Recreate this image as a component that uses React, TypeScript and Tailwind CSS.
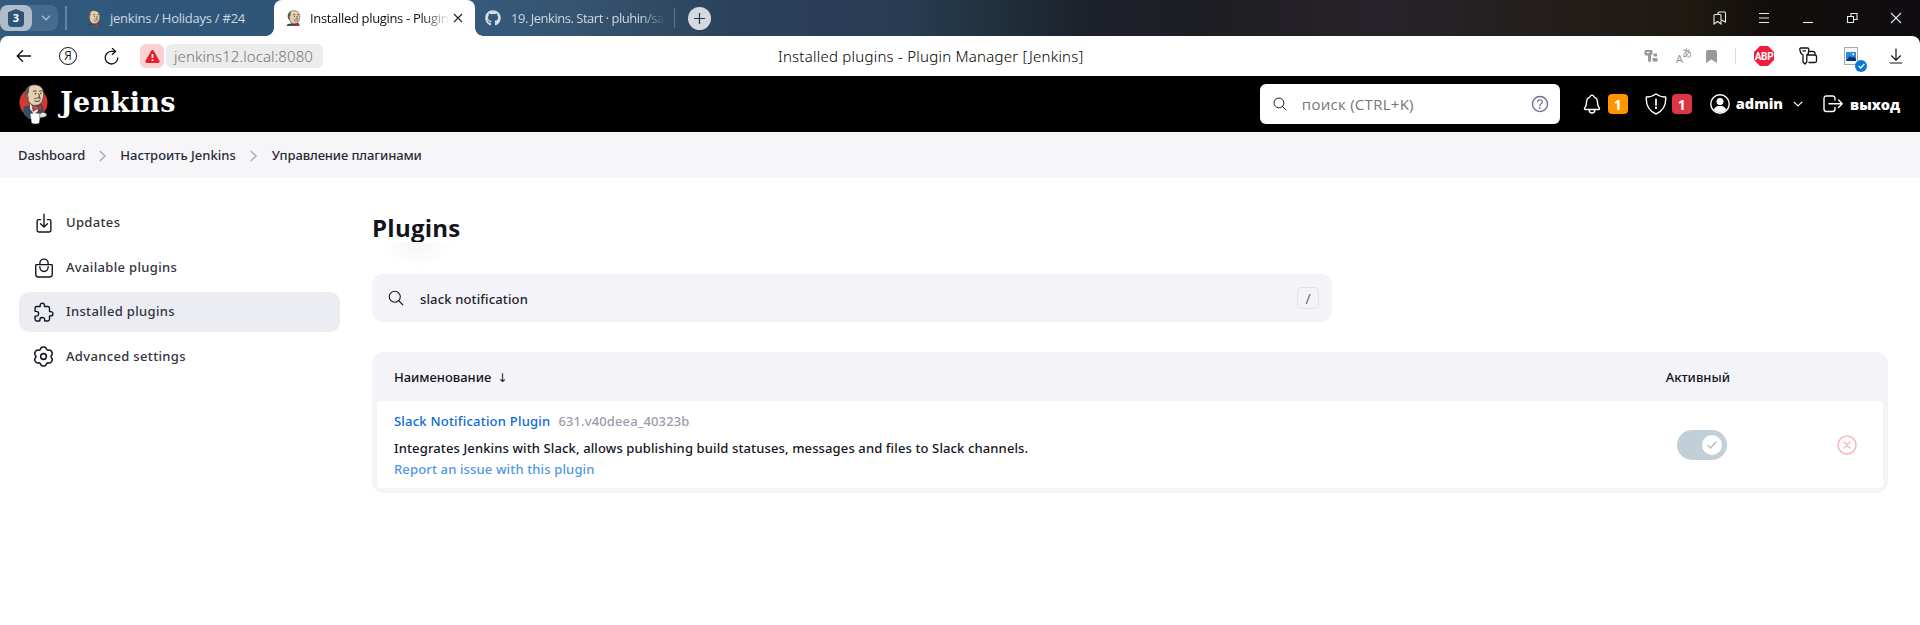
import React from "react";
import {
  IoSearchOutline,
  IoNotificationsOutline,
  IoExtensionPuzzleOutline,
  IoBagHandleOutline,
  IoDownloadOutline,
  IoHelpCircleOutline,
  IoCloseCircleOutline,
} from "react-icons/io5";
import { FaGithub } from "react-icons/fa";

function Butler({ className, disc, mug }: { className: string; disc?: boolean; mug?: boolean }) {
  return (
    <svg className={className} viewBox={mug ? "0 0 30 40" : "2 0 24 25"} aria-hidden="true">
      {disc && <ellipse cx="14.500" cy="18.500" rx="14" ry="14.500" fill="#d33833" />}
      <path d="M6 22 Q3 24 5.500 31 L10 35 H21 L24 31 Q26 24 22 20 Z" fill="#335061" />
      <path d="M8.500 15 Q5 11 7 6.500 Q9 1 15 0.800 Q21 0.600 23.500 5 Q25.500 9 24.500 13 Q24 19 19.500 21 Q14 23 10.500 19 Z" fill="#e6cfae" stroke="#2f2a26" strokeWidth="0.7" />
      <path d="M8 15 Q4.500 11 6.500 6 Q8 2.500 11 1.800 Q9.500 5 10 8.500 L8.800 10 Q10 13 9.500 16 Z" fill="#5b5954" />
      <path d="M8.500 10.500 Q6.500 11 8 14.500" fill="#e6cfae" stroke="#2f2a26" strokeWidth="0.5" />
      <path d="M14 7.500 Q15.500 6.300 17.500 7.300 M20.200 7.200 Q22 6.300 23.200 7.500 M19.500 9.500 L21 13 L18.800 13.400 M15.500 17 Q18.500 18.200 21.300 16.500" fill="none" stroke="#2f2a26" strokeWidth="0.9" />
      <circle cx="16.500" cy="9.700" r="0.8" fill="#2f2a26" />
      <circle cx="21.800" cy="9.500" r="0.7" fill="#2f2a26" />
      <path d="M15 14.800 Q18.500 13.300 22.300 14.700" fill="none" stroke="#6b6a65" strokeWidth="1" />
      <path d="M11 19.500 Q13 23.500 18 23 L19 27 L15 30 L11 25 Z" fill={mug ? "#f0f0ee" : "#335061"} />
      <path d="M13 22.500 L18 24 L22 20.800 L22.700 26 L18.500 24.800 L14 27.500 Z" fill="#d33833" stroke="#81211f" strokeWidth="0.4" />
      {mug && (
        <>
          <path d="M11.500 30 Q16 28.500 21 30 L20 39 Q16.500 40.500 12.800 39 Z" fill="#fff" stroke="#cfd3d6" strokeWidth="0.4" />
          <path d="M20.500 31 Q21.500 28 24.500 28.500 Q28.500 29 27.500 31.500 Q26 33.500 21 33.500 Z" fill="#e8e8e8" stroke="#4b4b4b" strokeWidth="0.5" />
        </>
      )}
    </svg>
  );
}

function Chevron({ className }: { className: string }) {
  return (
    <svg className={className} viewBox="0 0 14 16" fill="none" stroke="currentColor" strokeWidth="1.900" strokeLinecap="round" strokeLinejoin="round">
      <path d="M4 2 L10.500 8 L4 14" />
    </svg>
  );
}

function TabBar() {
  return (
    <div className="flex h-9 w-full items-center bg-[linear-gradient(90deg,#315a7e_0%,#2f5577_14%,#35597b_25%,#36546f_30%,#2b4059_39%,#283d54_47%,#20303c_52%,#1c2029_57%,#1e1e23_64%,#28232a_72%,#231e1b_81%,#1f1912_88%,#120e0c_92%,#0e0c10_100%)] text-[#cbd8e3]">
      <div className="flex h-[26px] w-[58px] items-center rounded-r-lg rounded-l-md bg-[#466b8c]">
        <div className="flex h-[26px] w-8 items-center justify-center rounded-lg bg-[#afbdca]">
          <div className="flex h-[18px] w-4 items-center justify-center rounded-[4px] bg-[#2d5476] font-['Open_Sans',sans-serif] text-[11px] font-bold text-white [clip-path:polygon(50%_0,100%_18%,100%_100%,0_100%,0_18%)]">3</div>
        </div>
        <svg className="ml-[9px] h-[6px] w-[10px]" viewBox="0 0 10 6" fill="none" stroke="#a9bccd" strokeWidth="1.3"><path d="M1 .7 5 4.800 9 .7" /></svg>
      </div>
      <div className="ml-[7px] h-6 w-[2px] bg-[#6683a0]" />
      <div className="flex w-[207px] items-center pl-[18px]">
        <Butler className="h-4 w-4" />
        <span className="mt-px ml-[9px] font-['Open_Sans',sans-serif] text-[13px] tracking-[-0.25px] whitespace-nowrap">jenkins / Holidays / #24</span>
      </div>
      <div className="relative flex h-9 w-[201px] items-center rounded-t-lg bg-white pl-[11px] text-[#111]">
        <div className="absolute bottom-0 -left-2 h-2 w-2 bg-[radial-gradient(circle_at_0_0,transparent_7.500px,#fff_8px)]" />
        <div className="absolute -right-2 bottom-0 h-2 w-2 bg-[radial-gradient(circle_at_100%_0,transparent_7.500px,#fff_8px)]" />
        <Butler className="h-4 w-4" />
        <span className="mt-px ml-[9px] w-[143px] font-['Open_Sans',sans-serif] text-[13px] tracking-[-0.33px] whitespace-nowrap [mask-image:linear-gradient(90deg,#000_78%,transparent_98%)]">Installed plugins - Plugin</span>
        <svg className="h-[10px] w-[10px]" viewBox="0 0 10 10" stroke="#222" strokeWidth="1.1"><path d="M1 1 9 9M9 1 1 9" /></svg>
      </div>
      <div className="flex w-[199px] items-center pl-[10px]">
        <FaGithub className="h-4 w-4 text-[#d5dde5]" />
        <span className="mt-px ml-[10px] w-[157px] font-['Open_Sans',sans-serif] text-[13px] tracking-[-0.48px] whitespace-nowrap [mask-image:linear-gradient(90deg,#000_82%,transparent_99%)]">19. Jenkins. Start · pluhin/sa</span>
      </div>
      <div className="h-5 w-px bg-[#5a7490]" />
      <div className="ml-[13px] flex h-[23px] w-[23px] items-center justify-center rounded-full bg-[#d3d9df]">
        <svg className="h-[11px] w-[11px]" viewBox="0 0 11 11" stroke="#26384b" strokeWidth="1.2"><path d="M5.500 0V11M0 5.500H11" /></svg>
      </div>
      <div className="mr-[17px] ml-auto flex items-center gap-[30px] text-[#e9e9e9]">
        <svg className="h-[14px] w-[14px]" viewBox="0 0 14 14" fill="none" stroke="currentColor" strokeWidth="1.1"><path d="M1 4.500Q1 3.500 2 3.500H7Q8 3.500 8 4.500V13L4.500 10.500 1 13Z" /><path d="M5 3V2Q5 1 6 1H11.500Q12.500 1 12.500 2V11L8.500 9" /></svg>
        <svg className="h-[14px] w-[14px]" viewBox="0 0 14 14" stroke="currentColor" strokeWidth="1.1"><path d="M2 2.500H12M2 7H12M2 11.500H12" /></svg>
        <svg className="h-[14px] w-[14px]" viewBox="0 0 14 14" stroke="currentColor" strokeWidth="1.1"><path d="M2 11.500H12" /></svg>
        <svg className="h-[14px] w-[14px]" viewBox="0 0 14 14" fill="none" stroke="currentColor" strokeWidth="1.1"><path d="M2.500 5.500H8.500V11.500H2.500ZM6 5.500V2.500H12V8.500H8.500" /></svg>
        <svg className="h-[14px] w-[14px]" viewBox="0 0 14 14" stroke="currentColor" strokeWidth="1.1"><path d="M2 2 12 12M12 2 2 12" /></svg>
      </div>
    </div>
  );
}

function Toolbar() {
  return (
    <div className="h-10 bg-[linear-gradient(90deg,#2f5577_50%,#0e0c10_50%)]">
      <div className="flex h-10 items-center rounded-t-lg bg-white pl-4 font-['Open_Sans',sans-serif]">
        <svg className="h-[14px] w-4" viewBox="0 0 16 14" fill="none" stroke="#111" strokeWidth="1.3"><path d="M15 7H1.500M7 1.200 1.200 7 7 12.800" /></svg>
        <div className="ml-[27px] flex h-[18px] w-[18px] items-center justify-center rounded-full border-[1.3px] border-[#111] text-[12px] leading-none text-[#111]">Я</div>
        <svg className="ml-[27px] h-[17px] w-[15px]" viewBox="0 0 15 17" fill="none" stroke="#111" strokeWidth="1.3"><path d="M13.800 9.500A6.300 6.300 0 1 1 8 3.400H11.500M8 0 11.500 3.400 8 6.800" /></svg>
        <div className="ml-[21px] flex h-6 w-6 items-center justify-center rounded-[6px] bg-[#fbd0d3]">
          <svg className="h-[13px] w-[15px]" viewBox="0 0 15 13"><path d="M6.200.8Q7.500-.6 8.800.8L14.600 11Q15 13 13 13H2Q0 13 .4 11Z" fill="#e3212d" /><path d="M7.500 4V8M7.500 9.500V11" stroke="#fff" strokeWidth="1.7" /></svg>
        </div>
        <div className="ml-[2px] flex h-6 w-[157px] items-center rounded-[6px] bg-[#ececec] pl-2 text-[15px] whitespace-nowrap text-[#747474]">
          <span className="font-['Noto_Sans',sans-serif] font-light tracking-[0.08px]">jenkins12.local:8080</span>
        </div>
        <span className="ml-[455px] font-['Noto_Sans',sans-serif] text-[15px] font-light tracking-[0.24px] whitespace-nowrap text-black">Installed plugins - Plugin Manager [Jenkins]</span>
        <div className="mr-[17px] ml-auto flex items-center">
          <svg className="h-[14px] w-[14px]" viewBox="0 0 14 14" fill="#999"><path d="M1.500 1H7.500Q8.500 1 8.500 2V5L7 6.500V12L5.500 13.500 4 12V6.500H1.500L.5 5.500V2ZM9.500 4.500H13V7.500H9.500ZM8.500 9H13.500V12.500H8.500Z" /><path d="M2.500 3.500H5.500" stroke="#fff" /></svg>
          <div className="ml-[18px] flex w-4 items-start leading-none text-[#8c8c8c]">
            <span className="mt-[5px] text-[11px]">A</span>
            <span className="-ml-px font-['Noto_Sans_CJK_JP',sans-serif] text-[10px]">あ</span>
          </div>
          <svg className="ml-[14px] h-[13px] w-[11px]" viewBox="0 0 11 13" fill="#999"><path d="M2 0H9Q11 0 11 2V13L5.500 9.500 0 13V2Q0 0 2 0Z" /></svg>
          <div className="ml-[18px] h-4 w-px bg-[#dcdcdc]" />
          <div className="ml-[18px] flex h-[20px] w-[20px] items-center justify-center bg-[#ed1d3d] font-['Roboto',sans-serif] text-[10px] font-bold tracking-[-0.3px] text-white [clip-path:polygon(30%_0,70%_0,100%_30%,100%_70%,70%_100%,30%_100%,0_70%,0_30%)]">ABP</div>
          <svg className="ml-[25px] h-[18px] w-[19px]" viewBox="0 0 19 18" fill="none" stroke="#111" strokeWidth="1.3" strokeLinejoin="round"><path d="M2 1H8.500Q10 1 9.800 2.800L9.300 6.500 7.800 8V15L6 17 4 15V8L2 6.500.8 2.800Q.6 1 2 1ZM3.500 3.800H7M9.800 4.500H14Q16 4.500 16 6.500V8M7.800 8H16Q17.500 8 17.500 9.500V14Q17.500 15.500 16 15.500H9.500" /></svg>
          <div className="relative ml-[26px] h-[18px] w-[14px] border border-[#a9a9a9] bg-[#f7f7f7]">
            <svg className="mt-[4px] ml-px h-[9px] w-[10px]" viewBox="0 0 10 9"><path d="M0 0H10V9H0Z" fill="#2c8ae0" /><path d="M0 9 4 4 6 6 7.500 4.500 10 7V9Z" fill="#10315c" /><circle cx="7.300" cy="2.300" r="1" fill="#fff" /></svg>
            <div className="absolute -right-[10px] -bottom-[8px] flex h-3 w-3 items-center justify-center rounded-full bg-[#0a78d6]">
              <svg className="h-[6px] w-[7px]" viewBox="0 0 7 6" fill="none" stroke="#fff" strokeWidth="1.3"><path d="M.7 3 2.800 5 6.300.8" /></svg>
            </div>
          </div>
          <svg className="ml-[31px] h-[16px] w-[14px]" viewBox="0 0 14 16" fill="none" stroke="#111" strokeWidth="1.2"><path d="M7 .5V12M2.300 7.500 7 12.200 11.700 7.500M.8 15H13.200" /></svg>
        </div>
      </div>
    </div>
  );
}

function Header() {
  return (
    <header className="flex h-14 items-center bg-black font-['Open_Sans',sans-serif] text-white">
      <Butler className="ml-[19px] h-10 w-[30px]" disc mug />
      <span className="ml-[11px] -mt-[3px] font-['DejaVu_Serif',serif] text-[27px] leading-none font-bold tracking-[0.35px]">Jenkins</span>
      <div className="mr-[23px] ml-auto flex h-10 w-[300px] items-center rounded-[6px] bg-white">
        <IoSearchOutline className="ml-[12px] h-[16px] w-[16px] text-[#23232e]" />
        <span className="ml-[14px] text-[15px] tracking-[0.28px] text-[#757575]">поиск (CTRL+K)</span>
        <IoHelpCircleOutline className="mr-[9px] ml-auto h-[22px] w-[22px] text-[#6f6f94]" />
      </div>
      <div className="mr-5 flex items-center whitespace-nowrap">
        <IoNotificationsOutline className="-ml-[2px] h-[22px] w-[22px]" />
        <span className="ml-[5px] flex h-5 w-5 items-center justify-center rounded-[4px] bg-[#fe9501] text-[14px] font-bold">1</span>
        <svg className="ml-[17px] h-[22px] w-[22px]" viewBox="0 0 22 22" fill="none" stroke="currentColor" strokeWidth="1.4" strokeLinecap="round" strokeLinejoin="round"><path d="M11 1Q15 4 20.700 4 21.500 16.500 11 21 .5 16.500 1.300 4 7 4 11 1Z" /><path d="M11 6.300V12" strokeWidth="1.700" /><circle cx="11" cy="14.800" r=".5" fill="currentColor" /></svg>
        <span className="ml-[5px] flex h-5 w-5 items-center justify-center rounded-[4px] bg-[#dc3545] text-[14px] font-bold">1</span>
        <svg className="ml-[18px] h-5 w-5" viewBox="0 0 20 20"><circle cx="10" cy="10" r="9.200" fill="none" stroke="#fff" strokeWidth="1.4" /><circle cx="10" cy="7.600" r="3.500" fill="#fff" /><path d="M3.600 15.800Q5.500 11.800 10 11.800T16.400 15.800Q13.500 18.600 10 18.600T3.600 15.800Z" fill="#fff" /></svg>
        <span className="ml-[6px] text-[14.500px] font-extrabold">admin</span>
        <svg className="ml-[10px] h-[6px] w-[10px]" viewBox="0 0 10 6" fill="none" stroke="#fff" strokeWidth="1.200"><path d="M.8.8 5 5 9.200.8" /></svg>
        <svg className="ml-5 h-[18px] w-5" viewBox="0 0 20 18" fill="none" stroke="#fff" strokeWidth="1.400" strokeLinecap="round" strokeLinejoin="round"><path d="M12 5V3.500Q12 1 9.500 1H3.500Q1 1 1 3.500V14Q1 16.500 3.500 16.500H9.500Q12 16.500 12 14V12.500M6 8.800H19M15.500 5 19.200 8.800 15.500 12.500" /></svg>
        <span className="mt-px ml-[7px] text-[14.500px] font-extrabold tracking-[-0.05px]">выход</span>
      </div>
    </header>
  );
}

function Breadcrumbs() {
  return (
    <nav className="flex h-[46px] items-center bg-[#f6f6f9] pt-px pl-[18px] font-['Noto_Sans',sans-serif] text-[13px] font-medium whitespace-nowrap text-[#2a2a36]">
      <span className="tracking-[-0.1px]">Dashboard</span>
      <Chevron className="mx-[10px] h-3 w-[15px] text-[#a8a8bd]" />
      <span className="tracking-[0px]">Настроить Jenkins</span>
      <Chevron className="mr-[11px] ml-[10px] h-3 w-[15px] text-[#a8a8bd]" />
      <span className="tracking-[-0.12px]">Управление плагинами</span>
    </nav>
  );
}

const gearPath =
  Array.from({ length: 120 }, (_, i) => {
    const a = (i / 120) * Math.PI * 2;
    const r = 9.1 + 1.0 * Math.cos(6 * a) - 0.25 * Math.cos(12 * a);
    return `${i ? "L" : "M"}${(12 + r * Math.sin(a)).toFixed(2)} ${(12 - r * Math.cos(a)).toFixed(2)}`;
  }).join("") + "Z";

function GearIcon({ className }: { className?: string }) {
  return (
    <svg className={className} viewBox="0 0 24 24" fill="none" stroke="currentColor" strokeWidth="1.600" strokeLinejoin="round">
      <path d={gearPath} />
      <circle cx="12" cy="12" r="3" />
    </svg>
  );
}

function Sidebar() {
  const base = "flex h-10 items-center rounded-[10px] pl-[12px]";
  const items = [
    { label: "Updates", icon: <IoDownloadOutline className="h-[22px] w-[22px]" /> },
    { label: "Available plugins", icon: <IoBagHandleOutline className="h-[22px] w-[22px]" /> },
    { label: "Installed plugins", icon: <IoExtensionPuzzleOutline className="h-[22px] w-[22px]" />, active: true },
    { label: "Advanced settings", icon: <GearIcon className="h-[23px] w-[23px]" /> },
  ];
  return (
    <aside className="ml-[19px] flex w-[321px] flex-col gap-[4.500px] pt-[25px] text-[#14141f]">
      {items.map((item) => (
        <a key={item.label} className={item.active ? `${base} bg-[#ecedf3]` : base}>
          <span className="ml-px flex w-[23px] justify-center">{item.icon}</span>
          <span className="ml-[11px] font-['Noto_Sans',sans-serif] text-[13px] font-medium tracking-[0.34px] text-[#333340]">{item.label}</span>
        </a>
      ))}
    </aside>
  );
}

function PluginTable() {
  return (
    <section className="mt-[30px] flex h-[141px] w-[1516px] flex-col rounded-[12px] bg-[#f3f3f8] px-[5px] pb-[5px] font-['Noto_Sans',sans-serif] text-[13px] font-medium">
      <div className="flex h-[49px] items-center pt-[2px] pl-[17px] text-[#14141f]">
        <span className="tracking-[-0.02px]">Наименование</span>
        <span className="ml-[6px] font-['DejaVu_Sans',sans-serif] text-[12px] font-normal">↓</span>
        <span className="mr-[153px] ml-auto tracking-[0px]">Активный</span>
      </div>
      <div className="flex flex-1 items-center rounded-[4px] bg-white pl-[17px]">
        <div className="flex flex-col whitespace-nowrap">
          <div className="flex items-center gap-[8px] leading-[20px]">
            <a className="tracking-[0.22px] text-[#0a6bd6]">Slack Notification Plugin</a>
            <span className="tracking-[0.12px] text-[#9b9bb0]">631.v40deea_40323b</span>
          </div>
          <p className="mt-[6px] leading-[22px] tracking-[0.125px] text-[#14141f]">Integrates Jenkins with Slack, allows publishing build statuses, messages and files to Slack channels.</p>
          <a className="leading-[20px] tracking-[0.145px] text-[#4f97e3]">Report an issue with this plugin</a>
        </div>
        <div className="ml-auto flex h-[30px] w-[50px] items-center justify-end rounded-full bg-[#c1cfd8] pr-[5px]">
          <div className="flex h-5 w-5 items-center justify-center rounded-full bg-white">
            <svg className="h-2 w-[10px]" viewBox="0 0 10 8" fill="none" stroke="#b3c4cf" strokeWidth="1.500" strokeLinecap="round"><path d="M1 4.500 3.500 7 9 1" /></svg>
          </div>
        </div>
        <IoCloseCircleOutline className="mr-[24px] ml-[108px] h-6 w-6 text-[#fbb5bd]" />
      </div>
    </section>
  );
}

function Main() {
  return (
    <main className="ml-8 flex flex-col">
      <h1 className="mt-[33px] h-[31px] text-[24px] leading-[34px] font-bold tracking-[0.25px] text-[#14141f]">Plugins</h1>
      <div className="ml-3 h-[26px] w-[70px] bg-[radial-gradient(ellipse_at_50%_0,#f5f5f6_0%,#fff_70%)]" />
      <div className="mt-[6px] flex h-12 w-[960px] items-center rounded-[10px] bg-[#f3f3f8] pr-[13px] pl-[15px]">
        <IoSearchOutline className="-mt-px h-[18px] w-[18px] text-[#14141f]" />
        <span className="mt-[3px] ml-[15px] font-['Noto_Sans',sans-serif] text-[13px] font-medium tracking-[0.14px] text-[#22222d]">slack notification</span>
        <kbd className="ml-auto flex h-[22px] w-[22px] items-center justify-center rounded-[5px] border border-[#e2e2e9] font-['Open_Sans',sans-serif] text-[14px] text-[#5b5b80]">/</kbd>
      </div>
      <PluginTable />
    </main>
  );
}

export default function App() {
  return (
    <div className="h-[625px] w-[1920px] overflow-hidden bg-white font-['Open_Sans',sans-serif]">
      <TabBar />
      <Toolbar />
      <Header />
      <Breadcrumbs />
      <div className="flex">
        <Sidebar />
        <Main />
      </div>
    </div>
  );
}
